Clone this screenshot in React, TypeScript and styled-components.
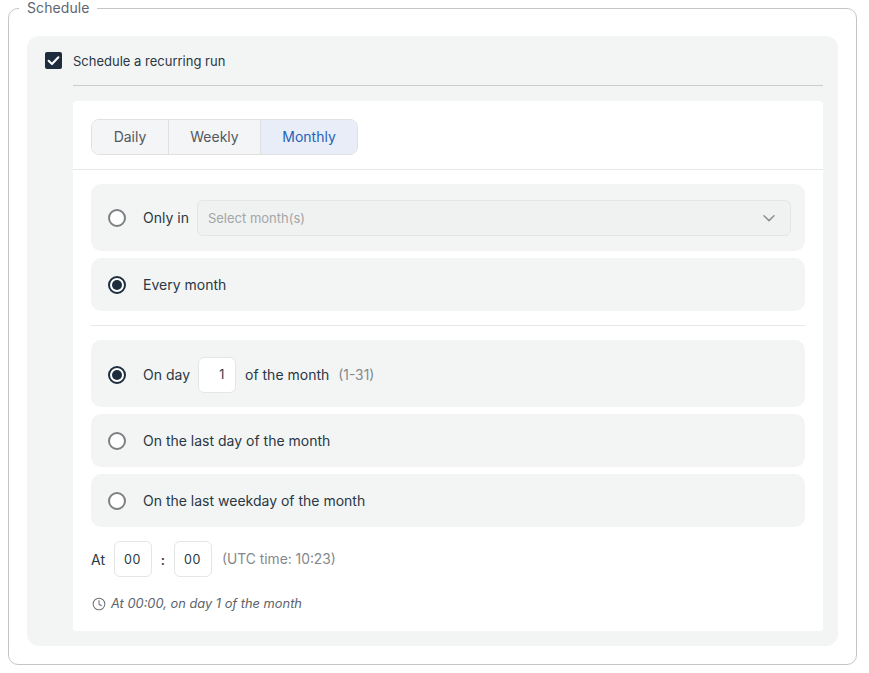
import React from "react";
import styled, { createGlobalStyle } from "styled-components";

const Global = createGlobalStyle`
  html, body { margin: 0; padding: 0; background: #fff; }
  body { font-family: Inter, "Liberation Sans", sans-serif; color: #1f2d3a; }
`;

const Page = styled.div`
  padding: 0 12px 0 8px;
  width: 869px;
  height: 673px;
  box-sizing: border-box;
  overflow: hidden;
`;

const Field = styled.fieldset`
  margin: 0;
  padding: 20px 18px 18px;
  border: 1px solid #c4c6c6;
  border-radius: 10px;
  height: 665px;
  box-sizing: border-box;
  min-width: 0;
`;

const Legend = styled.legend`
  margin-left: -8px;
  padding: 0 8px;
  font-size: 14px;
  line-height: 16px;
  color: #5d6670;
  letter-spacing: 0.08px;
`;

const Panel = styled.div`
  background: #f3f5f5;
  border-radius: 12px;
  padding: 0 15px 15px 18px;
  height: 610px;
  box-sizing: border-box;
`;

const CheckRow = styled.div`
  display: flex;
  align-items: center;
  gap: 12px;
  height: 49px;
  box-sizing: border-box;
`;

const CheckBox = styled.span`
  width: 17px;
  height: 17px;
  border-radius: 2px;
  background: #1d2d3d;
  display: flex;
  align-items: center;
  justify-content: center;
  margin-right: -1px;
`;

const CheckLabel = styled.span`
  font-size: 13px;
  color: #2a3744;
`;

const Body = styled.div`
  margin-left: 28px;
`;

const TopRule = styled.hr`
  margin: 0 0 15px;
  border: 0;
  height: 1px;
  background: #c9cccc;
`;

const Card = styled.div`
  background: #fff;
  border-radius: 4px;
  height: 530px;
  display: flex;
  flex-direction: column;
`;

const TabBar = styled.div`
  padding: 18px 18px 14px;
  border-bottom: 1px solid #e6e8e8;
  display: flex;
`;

const Tabs = styled.div`
  display: flex;
  height: 36px;
  box-sizing: border-box;
  border: 1px solid #dfe1e3;
  border-radius: 8px;
  overflow: hidden;
`;

const Tab = styled.div<{ $active?: boolean; $w: number }>`
  width: ${(p) => p.$w}px;
  box-sizing: border-box;
  display: flex;
  align-items: center;
  justify-content: center;
  font-size: 14px;
  padding-bottom: 1px;
  background: ${(p) => (p.$active ? "#e8edf7" : "#f4f5f6")};
  color: ${(p) => (p.$active ? "#2563b8" : "#53585e")};
  & + & { border-left: 1px solid #dfe1e3; }
`;

const Content = styled.div`
  padding: 14px 18px 0;
  display: flex;
  flex-direction: column;
`;

const Option = styled.div<{ $h: number; $gap?: number; $top?: number }>`
  height: ${(p) => p.$h}px;
  margin-bottom: ${(p) => p.$gap ?? 7}px;
  background: #f3f5f5;
  border-radius: 10px;
  display: flex;
  align-items: center;
  box-sizing: border-box;
  padding: ${(p) => p.$top ?? 0}px 14px 0 17px;
  font-size: 14px;
  color: #2a3744;
`;

const Radio = styled.span<{ $on?: boolean }>`
  width: 18px;
  height: 18px;
  box-sizing: border-box;
  border-radius: 50%;
  border: 2px solid ${(p) => (p.$on ? "#1d2d3d" : "#7d8082")};
  background: #fff;
  display: flex;
  align-items: center;
  justify-content: center;
  margin-right: 17px;
  flex: none;
  &::after {
    content: "";
    display: ${(p) => (p.$on ? "block" : "none")};
    width: 10px;
    height: 10px;
    border-radius: 50%;
    background: #1d2d3d;
  }
`;

const Select = styled.div`
  flex: 1;
  height: 36px;
  margin-left: 8px;
  box-sizing: border-box;
  background: #f0f1f1;
  border: 1px solid #e4e6e6;
  border-radius: 6px;
  display: flex;
  align-items: center;
  justify-content: space-between;
  padding: 0 14px 0 10px;
  font-size: 13px;
  color: #a3a6a8;
`;

const Rule = styled.hr`
  margin: 7px 0 14px;
  border: 0;
  height: 1px;
  background: #e6e8e8;
`;

const NumBox = styled.span`
  width: 38px;
  height: 36px;
  box-sizing: border-box;
  background: #fff;
  border: 1px solid #e4e6e6;
  border-radius: 6px;
  display: flex;
  align-items: center;
  justify-content: flex-end;
  padding-right: 10px;
  font-size: 12.5px;
  letter-spacing: 0.6px;
  color: #2a3744;
`;

const Inline = styled.span<{ $l?: number }>`
  margin-left: ${(p) => p.$l ?? 0}px;
`;

const Hint = styled.span<{ $l?: number }>`
  margin-left: ${(p) => p.$l ?? 0}px;
  font-size: 13.8px;
  color: #84888b;
`;

const TimeRow = styled.div`
  display: flex;
  align-items: center;
  height: 36px;
  margin-top: 14px;
  font-size: 14px;
  color: #2a3744;
`;

const Colon = styled.span`
  width: 22px;
  text-align: center;
  font-weight: 500;
`;

const Summary = styled.div`
  display: flex;
  align-items: center;
  gap: 5px;
  margin-top: 19px;
  padding-left: 1px;
  font-size: 12.85px;
  font-style: italic;
  color: #5c636a;
`;

export default function App() {
  return (
    <Page>
      <Global />
      <Field>
        <Legend>Schedule</Legend>
        <Panel>
          <CheckRow>
            <CheckBox>
              <svg width="13" height="13" viewBox="0 0 12 12" fill="none">
                <path d="M1.5 6.3 4.6 9.3 10.5 3" stroke="#fff" strokeWidth="1.9" strokeLinecap="round" strokeLinejoin="round" />
              </svg>
            </CheckBox>
            <CheckLabel>Schedule a recurring run</CheckLabel>
          </CheckRow>
          <Body>
            <TopRule />
            <Card>
              <TabBar>
                <Tabs>
                  <Tab $w={76}>Daily</Tab>
                  <Tab $w={92}>Weekly</Tab>
                  <Tab $w={97} $active>Monthly</Tab>
                </Tabs>
              </TabBar>
              <Content>
                <Option $h={67}>
                  <Radio />
                  Only in
                  <Select>
                    Select month(s)
                    <svg width="14" height="14" viewBox="0 0 14 14" fill="none">
                      <path d="M2 4.8 7 9.6 12 4.8" stroke="#8d9092" strokeWidth="1.5" strokeLinecap="round" strokeLinejoin="round" />
                    </svg>
                  </Select>
                </Option>
                <Option $h={53}>
                  <Radio $on />
                  Every month
                </Option>
                <Rule />
                <Option $h={67} $top={2}>
                  <Radio $on />
                  On day
                  <Inline $l={8}><NumBox>1</NumBox></Inline>
                  <Inline $l={9}>of the month</Inline>
                  <Hint $l={9}>(1-31)</Hint>
                </Option>
                <Option $h={53}>
                  <Radio />
                  On the last day of the month
                </Option>
                <Option $h={53} $gap={0}>
                  <Radio />
                  On the last weekday of the month
                </Option>
                <TimeRow>
                  At
                  <Inline $l={9}><NumBox>00</NumBox></Inline>
                  <Colon>:</Colon>
                  <NumBox>00</NumBox>
                  <Hint $l={10}>(UTC time: 10:23)</Hint>
                </TimeRow>
                <Summary>
                  <svg width="14" height="14" viewBox="0 0 24 24" fill="none" stroke="#6e7479" strokeWidth="1.8" strokeLinecap="round" strokeLinejoin="round">
                    <circle cx="12" cy="12" r="10" />
                    <path d="M12 6v6l4 3" />
                  </svg>
                  At 00:00, on day 1 of the month
                </Summary>
              </Content>
            </Card>
          </Body>
        </Panel>
      </Field>
    </Page>
  );
}
